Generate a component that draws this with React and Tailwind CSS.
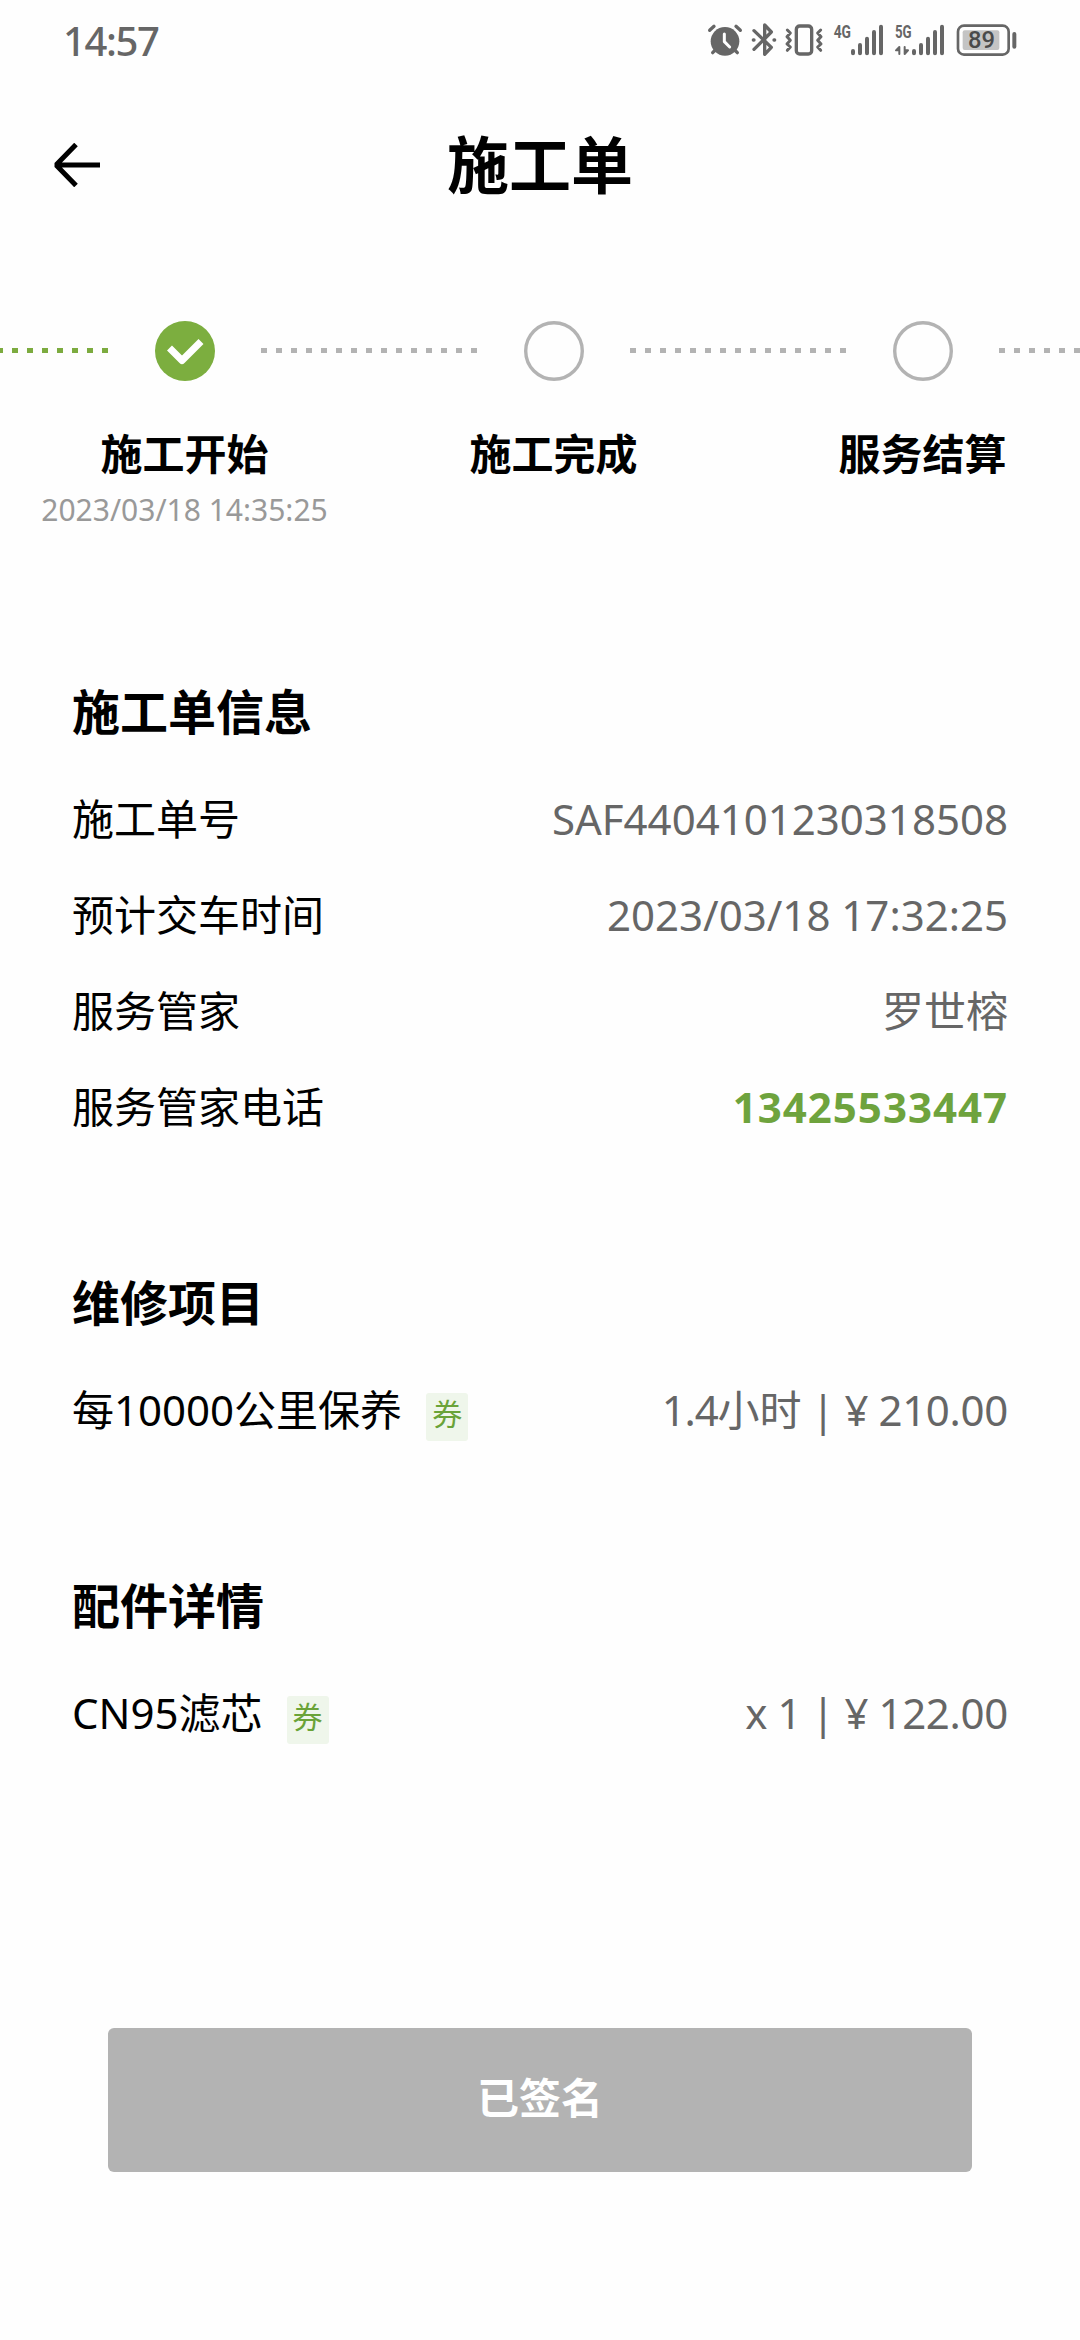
import { Fragment } from 'react';

const steps = [
  { label: '施工开始', time: '2023/03/18 14:35:25', done: true },
  { label: '施工完成' },
  { label: '服务结算' },
];

const info = [
  { label: '施工单号', value: 'SAF4404101230318508' },
  { label: '预计交车时间', value: '2023/03/18 17:32:25' },
  { label: '服务管家', value: '罗世榕' },
  { label: '服务管家电话', value: '13425533447', phone: true },
];

function StatusIcons() {
  return (
    <svg className="w-[350px] h-[60px]" viewBox="0 0 1050 180" fill="none" stroke="#666" strokeLinecap="round" strokeLinejoin="round">
      {/* alarm */}
      <circle cx="105" cy="94" r="43" fill="#666" stroke="none" />
      <path d="M59 61 L72 49 M151 61 L138 49 M68 128 L76 120 M142 128 L134 120" strokeWidth="10" />
      <path d="M103 72 V95 L119 111" stroke="#fefefe" strokeWidth="9" />
      {/* bluetooth */}
      <path d="M192 62 L244 112 L224 133 V45 L244 66 L192 118" strokeWidth="10" />
      <path d="M190 90 H192 M252 90 H254" strokeWidth="10" />
      {/* vibrate */}
      <rect x="319" y="48" width="46" height="84" rx="10" strokeWidth="10" />
      <path d="M292 60 L301 69 L291 80 L301 91 L291 102 L301 111 L292 121 M392 60 L383 69 L393 80 L383 91 L393 102 L383 111 L392 121" strokeWidth="9" />
      {/* signal 1 */}
      <path d="M489 123 V130 M510 105 V130 M531 86 V130 M552 66 V130 M573 50 V130" strokeWidth="12" />
      {/* signal 2 */}
      <path d="M672 123 V130 M693 105 V130 M714 86 V130 M735 66 V130 M756 50 V130" strokeWidth="12" />
      <path d="M628 132 V111 L618 121 H628 M644 111 V132 L654 121 H644" fill="#666" strokeWidth="6" />
      {/* battery */}
      <rect x="804" y="47" width="152" height="87" rx="18" strokeWidth="8" />
      <rect x="818" y="61" width="110" height="59" rx="6" fill="#c4c4c4" stroke="none" />
      <path d="M973 72 V110" strokeWidth="12" />
      <g className="font-['Roboto',sans-serif]" fill="#666" stroke="none" fontWeight="700">
        <text x="431" y="84" fontSize="54" textLength="52" lengthAdjust="spacingAndGlyphs">4G</text>
        <text x="615" y="84" fontSize="54" textLength="50" lengthAdjust="spacingAndGlyphs">5G</text>
        <text x="834" y="115" fontSize="69" fontWeight="500" fill="#4a4a4a" textLength="81" lengthAdjust="spacingAndGlyphs">89</text>
      </g>
    </svg>
  );
}

function DottedLine({ done }) {
  return (
    <svg className="w-[216px] h-[6px] shrink-0" viewBox="0 0 216 6">
      <path d="M0 2.5 H216" stroke={done ? '#7cab3f' : '#b3b3b3'} strokeWidth="5" strokeDasharray="6 9" />
    </svg>
  );
}

function StepIcon({ done }) {
  return (
    <svg className="w-[60px] h-[60px] shrink-0" viewBox="0 0 60 60" fill="none">
      {done ? (
        <>
          <circle cx="30" cy="30" r="30" fill="#7cae3f" />
          <path d="M14.5 27 L27 39.5 L46 20.5" stroke="#fff" strokeWidth="7" strokeLinejoin="round" />
        </>
      ) : (
        <circle cx="30" cy="30" r="28.3" stroke="#b3b3b3" strokeWidth="3.4" />
      )}
    </svg>
  );
}

function Section({ title, children }) {
  return (
    <section className="pb-28">
      <h2 className="h-[72px] mb-[23px] text-[48px] leading-[72px] font-bold">{title}</h2>
      {children}
    </section>
  );
}

function Row({ label, coupon, children }) {
  return (
    <div className="h-24 flex items-center justify-between text-[42px] leading-[60px] whitespace-nowrap">
      <div className="flex items-center">
        <span>{label}</span>
        {coupon && (
          <span className="mt-[14px] ml-6 w-[42px] h-12 rounded-[3px] bg-[#eff6eb] text-[#6aa338] text-[30px] leading-[42px] text-center">
            券
          </span>
        )}
      </div>
      <div className="text-[#666]">{children}</div>
    </div>
  );
}

export default function App() {
  return (
    <div className="w-[1080px] h-[2340px] overflow-hidden bg-[#fefefe] text-black font-['Noto_Sans','Noto_Sans_CJK_SC',sans-serif]">
      <div className="h-20 pt-[10px] pl-[63px] pr-10 flex justify-between">
        <span className="h-[60px] pt-px text-[40px] leading-[60px] tracking-[-1.4px] font-medium text-[#666]">14:57</span>
        <StatusIcons />
      </div>

      <header className="h-[170px] px-[54px] grid grid-cols-[1fr_auto_1fr] items-center">
        <svg className="w-[46px] h-[44px]" viewBox="0 0 46 44" fill="none" stroke="#000" strokeWidth="5">
          <path d="M46 22 H4 M22 1.5 L3 21 V23 L22 42.5" />
        </svg>
        <h1 className="text-[62px] leading-[90px] font-bold">施工单</h1>
      </header>

      <div className="mt-[71px] h-[60px] -ml-[108px] flex items-center gap-[46.5px]">
        <DottedLine done />
        {steps.map((s) => (
          <Fragment key={s.label}>
            <StepIcon done={s.done} />
            <DottedLine />
          </Fragment>
        ))}
      </div>
      <div className="mt-[43px] h-[252px] w-[1107px] grid grid-cols-3 text-center">
        {steps.map((s) => (
          <div key={s.label}>
            <div className="text-[42px] leading-[60px] font-bold">{s.label}</div>
            {s.time && <div className="mt-[5px] text-[30px] leading-[42px] text-[#999]">{s.time}</div>}
          </div>
        ))}
      </div>

      <main className="px-[72px]">
        <Section title="施工单信息">
          {info.map((r) => (
            <Row key={r.label} label={r.label}>
              <span className={r.phone ? 'font-bold text-[#6ea33d] tracking-[1px]' : ''}>{r.value}</span>
            </Row>
          ))}
        </Section>
        <Section title="维修项目">
          <Row label="每10000公里保养" coupon>
            <span className="tracking-[-1.2px]">1.4</span>
            <span className="[word-spacing:-1px]">小时 | ¥ </span>
            <span className="tracking-[-0.3px]">210.00</span>
          </Row>
        </Section>
        <Section title="配件详情">
          <Row label="CN95滤芯" coupon>
            <span className="[word-spacing:-1px]">x 1 | ¥ </span>
            <span className="tracking-[-0.3px]">122.00</span>
          </Row>
        </Section>
      </main>

      <div className="px-[108px] mt-[155px]">
        <button type="button" className="w-full h-36 pb-[5px] rounded-md bg-[#b3b3b3] text-white text-[42px] leading-[60px] font-bold">
          已签名
        </button>
      </div>
    </div>
  );
}
